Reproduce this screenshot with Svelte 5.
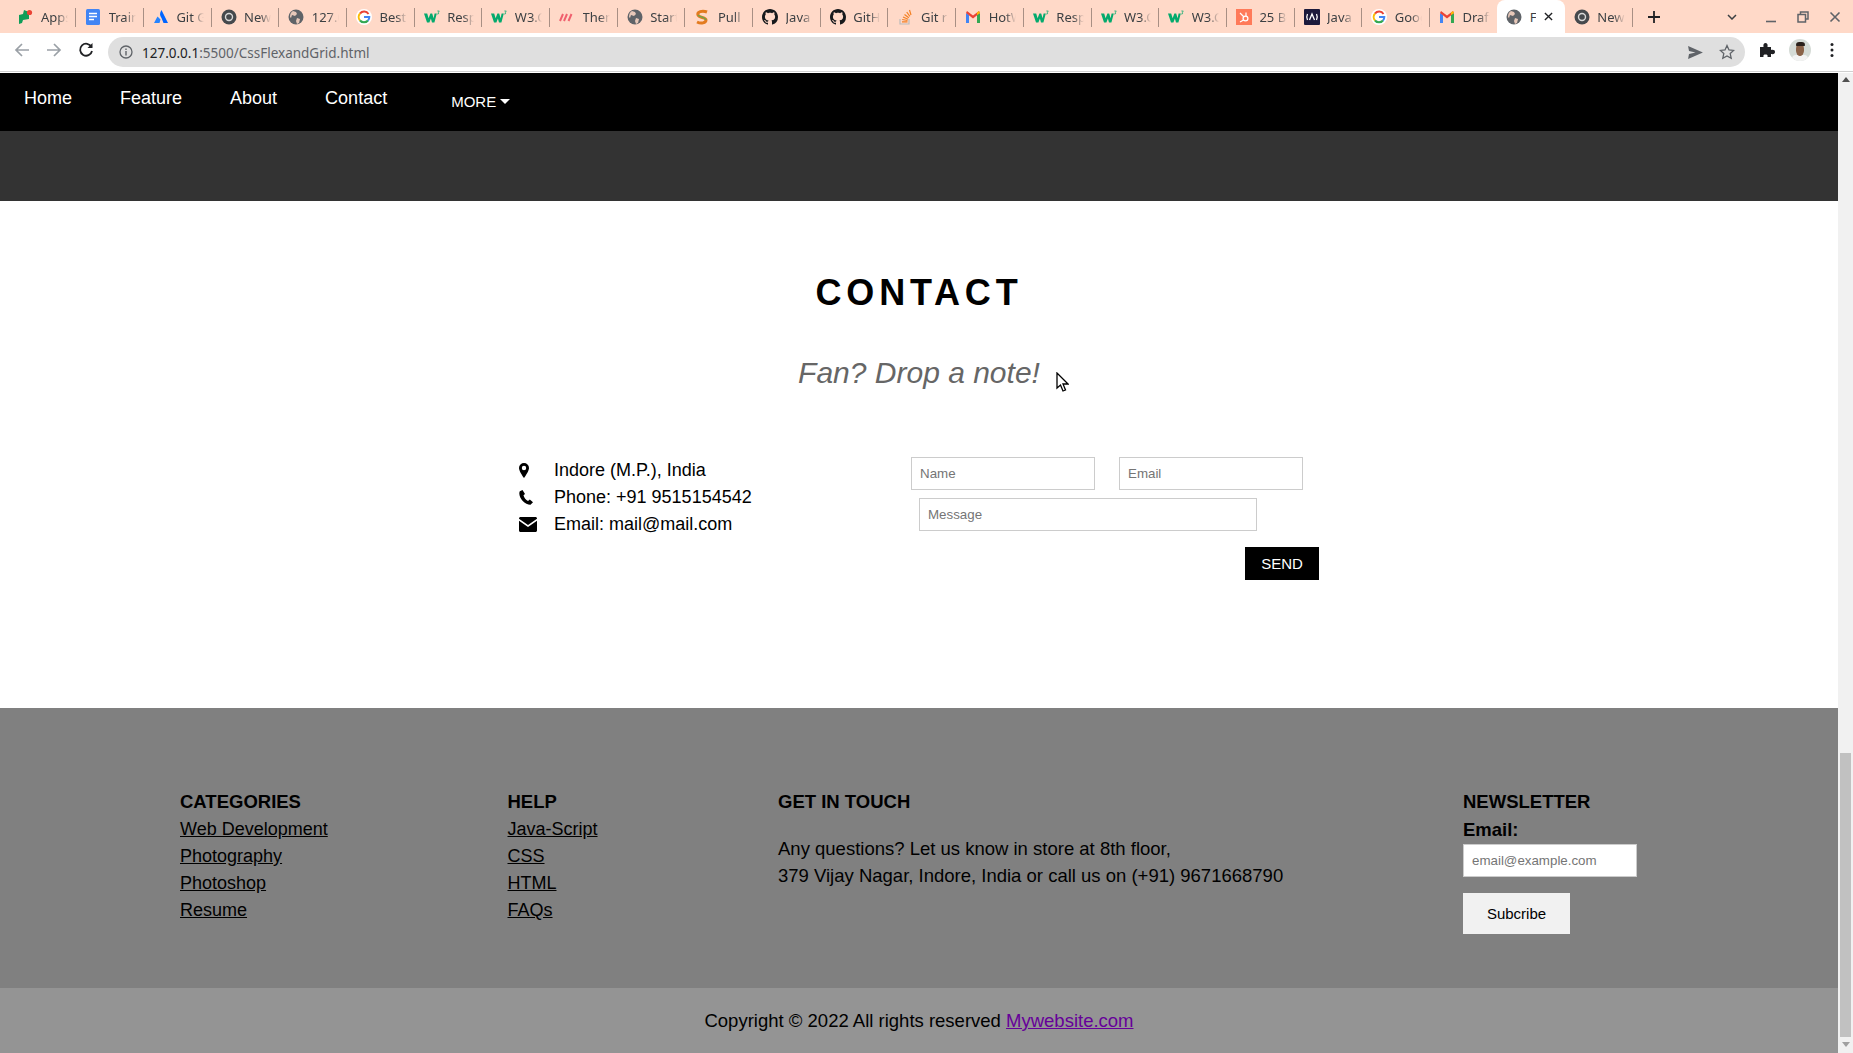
<script lang="ts">
    const tabs = [
        { icon: 'apps', title: 'Apps' },
        { icon: 'docs', title: 'Training' },
        { icon: 'atlassian', title: 'Git Guide' },
        { icon: 'chrome', title: 'New Tab' },
        { icon: 'globe', title: '127.0.0.1' },
        { icon: 'google', title: 'Best css' },
        { icon: 'w3', title: 'Responsive' },
        { icon: 'w3', title: 'W3.CSS' },
        { icon: 'slash', title: 'Theme' },
        { icon: 'globe', title: 'Start' },
        { icon: 'pull', title: 'Pull' },
        { icon: 'github', title: 'Java' },
        { icon: 'github', title: 'GitHub' },
        { icon: 'stack', title: 'Git r' },
        { icon: 'gmail', title: 'HotWire' },
        { icon: 'w3', title: 'Responsive' },
        { icon: 'w3', title: 'W3.CSS' },
        { icon: 'w3', title: 'W3.CSS' },
        { icon: 'hubspot', title: '25 Best' },
        { icon: 'front', title: 'Java' },
        { icon: 'google', title: 'Google' },
        { icon: 'gmail', title: 'Draft' },
        { icon: 'globe', title: 'F', active: true },
        { icon: 'chrome', title: 'New Tab' },
    ]

    const navLinks = ['Home', 'Feature', 'About', 'Contact']

    const footerCols = [
        { title: 'CATEGORIES', links: ['Web Development', 'Photography', 'Photoshop', 'Resume'] },
        { title: 'HELP', links: ['Java-Script', 'CSS', 'HTML', 'FAQs'] },
    ]
</script>

{#snippet favicon(kind: string)}
    <svg class="favicon" viewBox="0 0 16 16" aria-hidden="true">
        {#if kind === 'apps'}
            <path d="M1 6l4-1 1-4 5 2v7l-6 1-1 3-3 1z" fill="#0f9d58" />
            <circle cx="11.5" cy="3.5" r="2.6" fill="#ea4335" />
        {:else if kind === 'docs'}
            <rect x="1" y="0" width="14" height="16" rx="1.5" fill="#4285f4" />
            <path d="M4 4.5h8M4 7.5h8M4 10.5h5" stroke="#fff" stroke-width="1.4" />
        {:else if kind === 'atlassian'}
            <path d="M8.5 1c-2 3-2 5.500 0 8l2 5h4.500z" fill="#0065ff" />
            <path d="M4.500 7.500L1 14h5.500l1-3.500z" fill="#2684ff" />
        {:else if kind === 'chrome'}
            <circle cx="8" cy="8" r="7.500" fill="#45494d" />
            <circle cx="8" cy="8" r="4.200" fill="#d9d9d9" />
            <circle cx="8" cy="8" r="2.800" fill="#45494d" />
        {:else if kind === 'globe'}
            <circle cx="8" cy="8" r="7.500" fill="#5f6368" />
            <path d="M5 2l3 1 1 2-2 2-3-1-1 3-1-1c0-3 1-5 3-6zM9 9l3 1-1 4-2 1-1-3z" fill="#ffd9c8" opacity=".85" />
        {:else if kind === 'google'}
            <circle cx="8" cy="8" r="8" fill="#fff" />
            <path d="M12.500 5A5.300 5.300 0 0 0 4 4.500" fill="none" stroke="#ea4335" stroke-width="2" />
            <path d="M4 4.500a5.300 5.300 0 0 0 0 7" fill="none" stroke="#fbbc05" stroke-width="2" />
            <path d="M4 11.500a5.300 5.300 0 0 0 8 0" fill="none" stroke="#34a853" stroke-width="2" />
            <path d="M12 11.500c1-1 1.300-2 1.300-3.500H8" fill="none" stroke="#4285f4" stroke-width="2" />
        {:else if kind === 'w3'}
            <path d="M0 4.500h3.200l1.400 4.800 1.800-4.800h1.800l1.400 4.800 1-4.800h2.200L10.400 13.500H8L6.900 9.500 5.400 13.500H3z" fill="#04aa6d" />
            <path d="M13.300 2h2l-1 1.200q1 .6 0 1.800h-1.200" fill="none" stroke="#04aa6d" stroke-width=".7" />
        {:else if kind === 'slash'}
            <path d="M1 12l3-7M5 12l3-7M9.500 12l3-7" stroke="#f0606e" stroke-width="2" fill="none" />
        {:else if kind === 'pull'}
            <path d="M13 3C8 1 3 3 4 6s8 2 8 5-5 4-9 2" fill="none" stroke="#e37b1f" stroke-width="3" />
            <path d="M4 6c1 2 7 2 8 5" fill="none" stroke="#6aa84f" stroke-width="1.400" />
        {:else if kind === 'github'}
            <path d="M8 0C3.580 0 0 3.580 0 8c0 3.540 2.290 6.530 5.470 7.590.4.070.55-.17.55-.38 0-.19-.01-.82-.01-1.490-2.010.37-2.530-.49-2.690-.94-.09-.23-.48-.94-.82-1.130-.28-.15-.68-.52-.01-.53.630-.01 1.080.58 1.230.82.720 1.210 1.870.87 2.330.66.070-.52.280-.87.510-1.070-1.780-.2-3.640-.89-3.640-3.950 0-.87.310-1.590.82-2.150-.08-.2-.36-1.020.08-2.120 0 0 .67-.21 2.200.82.640-.18 1.320-.27 2-.27s1.360.09 2 .27c1.530-1.040 2.200-.82 2.200-.82.440 1.100.160 1.920.080 2.120.510.560.820 1.270.820 2.150 0 3.070-1.870 3.750-3.650 3.950.290.250.540.730.540 1.480 0 1.070-.01 1.930-.01 2.200 0 .21.150.46.550.38A8.010 8.010 0 0 0 16 8c0-4.420-3.580-8-8-8z" fill="#17191c" />
        {:else if kind === 'stack'}
            <path d="M3 10v5h9v-5" fill="none" stroke="#bcbbbb" stroke-width="1.200" />
            <path d="M5 12.800h5.500M5.200 10.500l5.300 1M6 8l5 2.200M7.500 5.500l4.300 3.300M9.700 3l3.200 4.300M12.500 1l1.500 5" fill="none" stroke="#f48024" stroke-width="1.200" />
        {:else if kind === 'gmail'}
            <path d="M1 14V4l3 2v8z" fill="#4285f4" />
            <path d="M12 14V6l3-2v10z" fill="#34a853" />
            <path d="M1 4l7 5.500L15 4l-1-2-6 4.500L2 2z" fill="#ea4335" />
            <path d="M12 6l3-2-1-2-2 1.500z" fill="#fbbc05" />
        {:else if kind === 'hubspot'}
            <rect width="16" height="16" fill="#ff7a59" />
            <circle cx="9.500" cy="9.500" r="2.400" fill="none" stroke="#fff" stroke-width="1.300" />
            <path d="M4 4l4 4M10 3.500v4M4 13l3.500-2" stroke="#fff" stroke-width="1.200" />
        {:else if kind === 'front'}
            <rect width="16" height="16" rx="1" fill="#1c1a3c" />
            <path d="M5.500 11L8 5l2.500 6M3.500 5Q2 8 3.500 11M12.500 5q1.500 3 0 6" fill="none" stroke="#fff" stroke-width="1.300" />
        {/if}
    </svg>
{/snippet}

<div class="screen">
    <header class="chrome">
        <div class="tabstrip">
            {#each tabs as tab}
                <div class="tab" class:active={tab.active}>
                    {@render favicon(tab.icon)}
                    <span class="tab-title">{tab.title}</span>
                    {#if tab.active}
                        <svg class="tab-close" viewBox="0 0 10 10"><path d="M1 1l8 8M9 1l-8 8" stroke="#202124" stroke-width="1.500" /></svg>
                    {/if}
                </div>
            {/each}
            <svg class="new-tab" viewBox="0 0 12 12"><path d="M6 0v12M0 6h12" stroke="#202124" stroke-width="1.800" /></svg>
            <div class="window-controls">
                <svg class="win-chevron" viewBox="0 0 10 6"><path d="M1 1l4 4 4-4" fill="none" stroke="#3c4043" stroke-width="1.500" /></svg>
                <svg class="win-btn" viewBox="0 0 12 12"><path d="M1 10.500h10" stroke="#5f6368" stroke-width="1.600" /></svg>
                <svg class="win-btn" viewBox="0 0 12 12"><path d="M3.500 3.500V1h7.500v7H8.500M1 3.500h7.500V11H1z" fill="none" stroke="#5f6368" stroke-width="1.500" /></svg>
                <svg class="win-btn" viewBox="0 0 12 12"><path d="M1.500 1.500l9 9M10.500 1.500l-9 9" stroke="#5f6368" stroke-width="1.600" /></svg>
            </div>
        </div>
        <div class="toolbar">
            <svg class="tool" viewBox="0 0 16 16"><path d="M15 8H2M8 2L2 8l6 6" fill="none" stroke="#9aa0a6" stroke-width="1.700" /></svg>
            <svg class="tool" viewBox="0 0 16 16"><path d="M1 8h13M8 2l6 6-6 6" fill="none" stroke="#9aa0a6" stroke-width="1.700" /></svg>
            <svg class="tool" viewBox="0 0 16 16"><path d="M13.500 5A6 6 0 1 0 14 9" fill="none" stroke="#202124" stroke-width="1.800" /><path d="M14.500 1v5h-5z" fill="#202124" /></svg>
            <div class="omnibox">
                <svg class="info" viewBox="0 0 14 14"><circle cx="7" cy="7" r="6" fill="none" stroke="#5f6368" stroke-width="1.300" /><path d="M7 6v4.500M7 3.500v1.400" stroke="#5f6368" stroke-width="1.400" /></svg>
                <span class="url"><b>127.0.0.1</b>:5500/CssFlexandGrid.html</span>
                <svg class="omni-send" viewBox="0 0 16 14"><path d="M0 0l16 7-16 7 1-5.500 7-1.500-7-1.500z" fill="#5f6368" /></svg>
                <svg class="omni-star" viewBox="0 0 16 16"><path d="M8 1.500l2 4.400 4.700.5-3.500 3.200 1 4.700L8 11.900l-4.200 2.400 1-4.700L1.300 6.400 6 5.900z" fill="none" stroke="#5f6368" stroke-width="1.300" /></svg>
            </div>
            <svg class="puzzle" viewBox="0 0 16 16"><path d="M1 5h3.500C4 2 5 1 6.500 1S9 2 8.500 5H12v3c3-.5 4 .5 4 2s-1 2.500-4 2v3H8.500c.5-2-.5-2.500-2-2.500s-2.500.5-2 2.500H1z" fill="#202124" /></svg>
            <div class="avatar">
                <span class="avatar-body"></span>
                <span class="avatar-face"></span>
                <span class="avatar-hair"></span>
            </div>
            <svg class="dots" viewBox="0 0 4 16"><circle cx="2" cy="2.500" r="1.500" /><circle cx="2" cy="8" r="1.500" /><circle cx="2" cy="13.500" r="1.500" /></svg>
        </div>
    </header>

    <div class="viewport">
        <main class="page">
            <nav class="topnav">
                {#each navLinks as link}
                    <span class="nav-link">{link}</span>
                {/each}
                <span class="nav-more">MORE <i class="caret"></i></span>
            </nav>
            <div class="band"></div>

            <section class="contact">
                <h2>CONTACT</h2>
                <p class="tagline">Fan? Drop a note!</p>
                <div class="contact-row">
                    <ul class="contact-info">
                        <li>
                            <span class="ci-icon"><svg width="10" height="15" viewBox="0 0 10 15"><path fill-rule="evenodd" d="M5 0A5 5 0 0 0 0 5c0 2.800 3 7.200 5 10 2-2.800 5-7.200 5-10A5 5 0 0 0 5 0zm0 2.800a2.200 2.200 0 1 1 0 4.400 2.200 2.200 0 0 1 0-4.400z" /></svg></span>
                            Indore (M.P.), India
                        </li>
                        <li>
                            <span class="ci-icon"><svg width="14" height="15" viewBox="0 0 14 15"><path d="M3.500 0L.8 1.200C-.5 4 1 8 3.500 10.800 6 13.500 9.500 15 11.500 14.800L14 12.300 10.800 9.500 9 11C7 10 5 7.500 4.500 5.200L6 4z" /></svg></span>
                            Phone: +91 9515154542
                        </li>
                        <li>
                            <span class="ci-icon"><svg width="18" height="15" viewBox="0 0 18 15"><path d="M1.500 0h15c.8 0 1.500.7 1.500 1.500v.3L9 8 0 1.800v-.3C0 .7.700 0 1.500 0zM0 3.800L9 10l9-6.200v9.700c0 .8-.7 1.500-1.500 1.500h-15C.7 15 0 14.300 0 13.500z" /></svg></span>
                            Email: mail@mail.com
                        </li>
                    </ul>
                    <form class="contact-form">
                        <div class="form-pair">
                            <input type="text" placeholder="Name" />
                            <input type="text" placeholder="Email" />
                        </div>
                        <input class="message" type="text" placeholder="Message" />
                        <button class="send" type="button">SEND</button>
                    </form>
                </div>
            </section>

            <footer class="site-footer">
                {#each footerCols as col}
                    <div class="foot-col">
                        <h4>{col.title}</h4>
                        {#each col.links as link}
                            <div><span class="foot-link">{link}</span></div>
                        {/each}
                    </div>
                {/each}
                <div class="foot-col">
                    <h4>GET IN TOUCH</h4>
                    <p class="touch">Any questions? Let us know in store at 8th floor,<br />379 Vijay Nagar, Indore, India or call us on (+91) 9671668790</p>
                </div>
                <div class="foot-col">
                    <h4>NEWSLETTER</h4>
                    <label class="news-label" for="news-email">Email:</label>
                    <input id="news-email" class="news-input" type="text" placeholder="email@example.com" />
                    <button class="subscribe" type="button">Subcribe</button>
                </div>
            </footer>
            <div class="copyright">Copyright © 2022 All rights reserved <span class="copy-link">Mywebsite.com</span></div>
        </main>

        <div class="scrollbar">
            <i class="arrow-up"></i>
            <div class="thumb"></div>
            <i class="arrow-down"></i>
        </div>
    </div>

    <svg class="cursor" width="13" height="21" viewBox="0 0 13 21"><path d="M1 1v15l3.500-3 2.500 6 2.500-1-2.500-6H12z" fill="#fff" stroke="#000" stroke-width="1.300" /></svg>
</div>

<style>
    :global(body) {
        margin: 0;
        overflow: hidden;
    }

    .screen {
        position: relative;
        width: 1853px;
        height: 1053px;
        overflow: hidden;
        display: flex;
        flex-direction: column;
        font-family: 'Liberation Sans', Arial, sans-serif;
        color: #000;
    }

    /* browser chrome */
    .chrome {
        flex: none;
        height: 73px;
        background: #fff;
        font-family: 'Noto Sans', 'Open Sans', sans-serif;
    }

    .tabstrip {
        height: 33px;
        background: #ffd9c8;
        padding-left: 8.500px;
        display: flex;
        align-items: stretch;
    }

    .tab {
        position: relative;
        flex: none;
        width: 67.7px;
        box-sizing: border-box;
        padding: 0 8px 0 9px;
        display: flex;
        align-items: center;
        gap: 7.500px;
        font-size: 13px;
        color: #3c4043;
    }

    .tab::after {
        content: '';
        position: absolute;
        right: 0;
        top: 8px;
        height: 19px;
        width: 1px;
        background: #a88f84;
    }

    .tab.active {
        background: #fff;
        border-radius: 8px 8px 0 0;
        margin-left: -0.500px;
        padding-right: 5px;
    }

    .tab.active::after {
        display: none;
    }

    .favicon {
        flex: none;
        width: 16px;
        height: 16px;
    }

    .tab-title {
        flex: 1;
        min-width: 0;
        overflow: hidden;
        white-space: nowrap;
        mask-image: linear-gradient(to right, #000 60%, transparent 100%);
    }

    .tab.active .tab-title {
        mask-image: none;
    }

    .tab-close {
        flex: none;
        width: 9px;
        height: 9px;
        margin-right: 7px;
    }

    .new-tab {
        flex: none;
        width: 12px;
        height: 12px;
        align-self: center;
        margin-left: 15px;
    }

    .window-controls {
        margin-left: auto;
        padding-right: 12px;
        display: flex;
        align-items: center;
    }

    .win-chevron {
        width: 10px;
        height: 6px;
        margin-right: 8px;
    }

    .win-btn {
        width: 12px;
        height: 12px;
        margin-left: 20px;
    }

    .toolbar {
        height: 39px;
        box-sizing: border-box;
        border-bottom: 1px solid #d0d0d0;
        display: flex;
        align-items: center;
        padding: 0 0 4px 14px;
    }

    .tool {
        flex: none;
        width: 16px;
        height: 16px;
        margin-right: 16px;
    }

    .tool:nth-child(3) {
        margin-right: 14px;
    }

    .omnibox {
        flex: none;
        width: 1637px;
        height: 30px;
        box-sizing: border-box;
        margin-top: 5px;
        margin-bottom: 1px;
        background: #dfdfdf;
        border-radius: 15px;
        display: flex;
        align-items: center;
        padding: 0 10px 0 11px;
    }

    .info {
        width: 14px;
        height: 14px;
        margin-right: 9px;
    }

    .url {
        position: relative;
        top: 0.500px;
        font-size: 13.500px;
        color: #5f6368;
    }

    .url b {
        font-weight: 400;
        color: #202124;
    }

    .omni-send {
        width: 15px;
        height: 13px;
        margin-left: auto;
    }

    .omni-star {
        width: 16px;
        height: 16px;
        margin-left: 16px;
    }

    .puzzle {
        flex: none;
        width: 16px;
        height: 16px;
        margin-left: 14px;
    }

    .avatar {
        flex: none;
        position: relative;
        width: 22px;
        height: 22px;
        margin-left: 14px;
        border-radius: 50%;
        background: #d5dbd6;
        overflow: hidden;
    }

    .avatar-body {
        position: absolute;
        left: 3px;
        top: 16px;
        width: 16px;
        height: 8px;
        border-radius: 4px 4px 0 0;
        background: #f3f3f3;
    }

    .avatar-face {
        position: absolute;
        left: 7px;
        top: 4px;
        width: 8px;
        height: 13px;
        border-radius: 45%;
        background: #8a6248;
    }

    .avatar-hair {
        position: absolute;
        left: 6.500px;
        top: 3px;
        width: 9px;
        height: 4px;
        border-radius: 4px 4px 1px 1px;
        background: #2a201b;
    }

    .dots {
        flex: none;
        width: 4px;
        height: 16px;
        margin-left: 19px;
        fill: #202124;
    }

    /* page */
    .viewport {
        flex: 1;
        min-height: 0;
        display: flex;
    }

    .page {
        flex: none;
        width: 1838px;
        background: #fff;
    }

    .topnav {
        height: 58px;
        background: #000;
        color: #fff;
        display: flex;
        align-items: flex-start;
    }

    .nav-link {
        padding: 12px 24px;
        font-size: 18px;
        line-height: 27px;
    }

    .nav-more {
        margin-left: 40px;
        padding-top: 19px;
        font-size: 15px;
        line-height: 20px;
    }

    .caret {
        display: inline-block;
        width: 0;
        height: 0;
        vertical-align: 3px;
        border: 5px solid transparent;
        border-top-color: #fff;
        border-bottom: 0;
    }

    .band {
        height: 70px;
        background: #333;
    }

    .contact {
        height: 507px;
        box-sizing: border-box;
        padding-top: 65px;
        text-align: center;
    }

    .contact h2 {
        margin: 0;
        font-size: 36px;
        line-height: 54px;
        letter-spacing: 4.800px;
    }

    .tagline {
        margin: 30px 0 0;
        font-size: 30px;
        line-height: 45px;
        font-style: italic;
        color: #666;
    }

    .contact-row {
        margin-top: 62px;
        padding-left: 519px;
        display: flex;
        text-align: left;
    }

    .contact-info {
        flex: none;
        width: 392px;
        margin: 0;
        padding: 0;
        list-style: none;
        font-size: 18px;
        line-height: 27px;
    }

    .contact-info li {
        display: flex;
        align-items: center;
    }

    .ci-icon {
        flex: none;
        width: 35px;
        display: flex;
        align-items: center;
    }

    .contact-form {
        flex: none;
        width: 408px;
        display: flex;
        flex-direction: column;
        align-items: flex-start;
    }

    .form-pair {
        display: flex;
        gap: 24px;
    }

    input {
        box-sizing: border-box;
        height: 33px;
        padding: 8px;
        border: 1px solid #ccc;
        background: #fff;
        font-family: 'Liberation Sans', Arial, sans-serif;
        font-size: 13.333px;
        outline: none;
    }

    .form-pair input {
        width: 184px;
    }

    .message {
        width: 338px;
        margin: 8px 0 0 8px;
    }

    .send {
        align-self: flex-end;
        width: 74px;
        height: 33px;
        margin-top: 16px;
        padding: 0;
        border: 0;
        background: #000;
        color: #fff;
        font-family: inherit;
        font-size: 15px;
    }

    .site-footer {
        box-sizing: border-box;
        height: 280px;
        padding: 80px 0 0 180px;
        background: #808080;
        display: grid;
        grid-template-columns: 327.500px 270.500px 685px 1fr;
        font-size: 18px;
        line-height: 27px;
    }

    .foot-col h4 {
        margin: 0 0 1px;
        font-size: 18.500px;
        line-height: 27px;
        font-weight: 700;
    }

    .foot-link {
        text-decoration: underline;
    }

    .touch {
        margin: 20px 0 0;
        font-size: 18.500px;
    }

    .news-label {
        display: block;
        font-size: 18.500px;
        font-weight: 700;
    }

    .news-input {
        display: block;
        width: 174px;
        margin-top: 1px;
    }

    .subscribe {
        display: block;
        width: 107px;
        height: 41px;
        margin-top: 16px;
        padding: 0;
        border: 0;
        background: #f1f1f1;
        color: #000;
        font-family: inherit;
        font-size: 15px;
    }

    .copyright {
        height: 65px;
        box-sizing: border-box;
        padding-top: 19px;
        background: #949494;
        text-align: center;
        font-size: 18.500px;
        line-height: 27px;
    }

    .copy-link {
        color: #660099;
        text-decoration: underline;
    }

    .scrollbar {
        flex: none;
        width: 15px;
        background: #f1f1f1;
        display: flex;
        flex-direction: column;
        align-items: center;
    }

    .arrow-up,
    .arrow-down {
        width: 0;
        height: 0;
        border: 4px solid transparent;
    }

    .arrow-up {
        margin-top: 4px;
        border-top: 0;
        border-bottom: 5px solid #505050;
    }

    .thumb {
        width: 11px;
        height: 284px;
        margin-top: 671px;
        background: #c1c1c1;
    }

    .arrow-down {
        margin-top: 5px;
        border-bottom: 0;
        border-top: 5px solid #a0a0a0;
    }

    .cursor {
        position: absolute;
        left: 1056px;
        top: 372px;
    }
</style>
